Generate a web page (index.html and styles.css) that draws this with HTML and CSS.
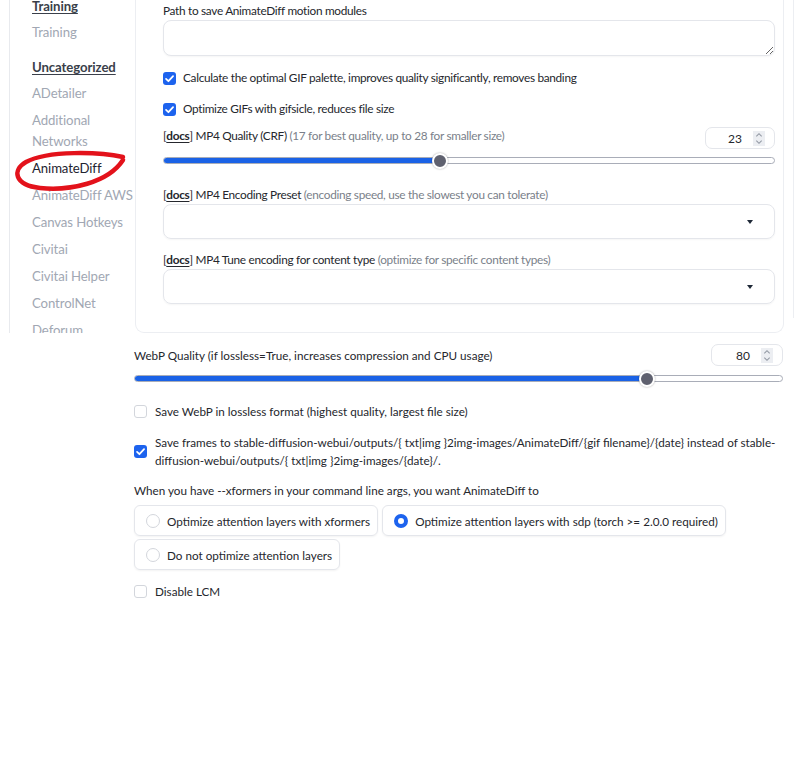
FILE: index.html
```html
<!DOCTYPE html>
<html lang="en">
<head>
  <meta charset="UTF-8">
  <title>Settings - AnimateDiff</title>
  <link rel="stylesheet" href="styles.css">
</head>
<body>
  <div class="page">
    <section class="top">
      <nav class="sidebar">
        <div class="cat">Training</div>
        <div class="item">Training</div>
        <div class="cat">Uncategorized</div>
        <div class="item">ADetailer</div>
        <div class="item">Additional Networks</div>
        <div class="item active">AnimateDiff</div>
        <div class="item">AnimateDiff AWS</div>
        <div class="item">Canvas Hotkeys</div>
        <div class="item">Civitai</div>
        <div class="item">Civitai Helper</div>
        <div class="item">ControlNet</div>
        <div class="item">Deforum</div>
      </nav>

      <div class="panel">
        <div class="label first">Path to save AnimateDiff motion modules</div>
        <textarea class="textbox" rows="2"></textarea>

        <label class="check-row gap-top">
          <span class="check"><svg viewBox="0 0 12 12"><path d="M2.8 6.3l2.2 2.2 4.3-4.7"/></svg></span>
          Calculate the optimal GIF palette, improves quality significantly, removes banding
        </label>
        <label class="check-row gap-top">
          <span class="check"><svg viewBox="0 0 12 12"><path d="M2.8 6.3l2.2 2.2 4.3-4.7"/></svg></span>
          Optimize GIFs with gifsicle, reduces file size
        </label>

        <div class="slider-head crf">
          <span class="label">[<b>docs</b>] MP4 Quality (CRF) <span class="hint">(17 for best quality, up to 28 for smaller size)</span></span>
          <div class="number"><span class="value">23</span><span class="spin"><svg viewBox="0 0 10 14"><path d="M2.5 5l2.5-2.5 2.5 2.5M2.5 9l2.5 2.5 2.5-2.5"/></svg></span></div>
        </div>
        <div class="slider"><div class="fill" style="width: 45.3%"></div><div class="thumb" style="left: 45.3%"></div></div>

        <div class="label field-top">[<b>docs</b>] MP4 Encoding Preset <span class="hint">(encoding speed, use the slowest you can tolerate)</span></div>
        <div class="dropdown"><span class="caret"></span></div>

        <div class="label field-top-sm">[<b>docs</b>] MP4 Tune encoding for content type <span class="hint">(optimize for specific content types)</span></div>
        <div class="dropdown"><span class="caret"></span></div>
      </div>

      <div class="edge"></div>

      <svg class="scribble" viewBox="0 0 140 200" width="140" height="200">
        <path d="M123 157 C 100 152, 48 150, 26 162 C 12 170, 14 185, 40 188 C 70 191, 108 183, 123 160"/>
      </svg>
    </section>

    <section class="bottom">
      <div class="slider-head webp">
        <span class="label">WebP Quality (if lossless=True, increases compression and CPU usage)</span>
        <div class="number wide"><span class="value">80</span><span class="spin"><svg viewBox="0 0 10 14"><path d="M2.5 5l2.5-2.5 2.5 2.5M2.5 9l2.5 2.5 2.5-2.5"/></svg></span></div>
      </div>
      <div class="slider slider-b"><div class="fill" style="width: 79.2%"></div><div class="thumb" style="left: 79.2%"></div></div>

      <label class="check-row wide-gap lossless">
        <span class="check off"></span>
        Save WebP in lossless format (highest quality, largest file size)
      </label>
      <label class="check-row wide-gap frames">
        <span class="check"><svg viewBox="0 0 12 12"><path d="M2.8 6.3l2.2 2.2 4.3-4.7"/></svg></span>
        <span>Save frames to stable-diffusion-webui/outputs/{ txt|img }2img-images/AnimateDiff/{gif filename}/{date} instead of stable-diffusion-webui/outputs/{ txt|img }2img-images/{date}/.</span>
      </label>

      <div class="label question">When you have --xformers in your command line args, you want AnimateDiff to</div>
      <div class="radios">
        <label class="radio-box"><span class="radio"></span>Optimize attention layers with xformers</label>
        <label class="radio-box"><span class="radio on"></span>Optimize attention layers with sdp (torch &gt;= 2.0.0 required)</label>
        <label class="radio-box"><span class="radio"></span>Do not optimize attention layers</label>
      </div>

      <label class="check-row wide-gap lcm">
        <span class="check off"></span>
        Disable LCM
      </label>
    </section>
  </div>
</body>
</html>
```

FILE: styles.css
```css
:root {
  --text: #25272d;
  --muted: #7a7f8a;
  --nav: #a1a7b3;
  --border: #e4e6eb;
  --blue: #1a62e6;
  --thumb: #5f616f;
}

body {
  margin: 0;
  background: #ffffff;
  color: var(--text);
  font-family: Lato, "Open Sans", sans-serif;
  font-size: 11.7px;
}

.page {
  width: 800px;
}

/* top: settings screen with the sidebar */
.top {
  position: relative;
  display: flex;
  align-items: flex-start;
  height: 333px;
  overflow: hidden;
}

.sidebar {
  width: 103px;
  flex-shrink: 0;
  margin-left: 9px;
  padding-left: 22px;
  height: 333px;
  border-left: 1px solid #e8eaee;
  font-size: 13.2px;
  letter-spacing: -0.1px;
}

.cat {
  line-height: 21px;
  margin: 11px 0 2px;
  font-weight: 700;
  color: #3a3f4a;
  text-decoration: underline;
  text-underline-offset: 2px;
}

.cat:first-child {
  margin-top: -4px;
}

.item {
  line-height: 21px;
  padding: 3px 0;
  color: var(--nav);
}

.item.active {
  color: #1e2330;
}

.panel {
  width: 649px;
  flex-shrink: 0;
  box-sizing: border-box;
  padding: 0 8px 28px 27px;
  border: 1px solid #eceef2;
  border-top: none;
  border-radius: 0 0 9px 9px;
  font-size: 11.8px;
  letter-spacing: -0.3px;
}

.edge {
  width: 0;
  height: 318px;
  margin-left: 9px;
  border-left: 1px solid #eceef2;
}

.scribble {
  position: absolute;
  left: 0;
  top: 0;
  pointer-events: none;
}

.scribble path {
  fill: none;
  stroke: #e3121b;
  stroke-width: 4.5;
  stroke-linecap: round;
}

.label {
  display: block;
  line-height: 18px;
}

.label b {
  text-decoration: underline;
  text-underline-offset: 2px;
}

.label.first {
  padding-top: 2px;
}

.hint {
  color: var(--muted);
}

.textbox {
  display: block;
  width: 100%;
  height: 36px;
  box-sizing: border-box;
  margin: 0;
  border: 1px solid var(--border);
  border-radius: 8px;
  resize: vertical;
  box-shadow: 0 1px 2px rgba(0, 0, 0, 0.04);
}

.check-row {
  display: flex;
  align-items: center;
  gap: 7px;
  line-height: 18px;
}

.gap-top {
  margin-top: 13px;
}

.check {
  width: 13px;
  height: 13px;
  flex-shrink: 0;
  box-sizing: border-box;
  border-radius: 3px;
  background: #1d63ee;
  display: flex;
}

.check svg {
  width: 13px;
  height: 13px;
}

.check path {
  fill: none;
  stroke: #ffffff;
  stroke-width: 1.6;
  stroke-linecap: round;
  stroke-linejoin: round;
}

.check.off {
  background: #ffffff;
  border: 1px solid #d3d6dc;
}

.slider-head {
  display: flex;
  align-items: flex-start;
  justify-content: space-between;
  height: 22px;
}

.slider-head.crf {
  margin-top: 9px;
}

.number {
  width: 70px;
  height: 22px;
  box-sizing: border-box;
  border: 1px solid var(--border);
  border-radius: 7px;
  display: flex;
  align-items: center;
  justify-content: flex-end;
  padding-right: 9px;
  gap: 11px;
  font-size: 12px;
  letter-spacing: 0;
}

.number.wide {
  width: 72px;
}

.spin {
  width: 12px;
  height: 15px;
  background: #eceef2;
  display: flex;
}

.spin svg {
  width: 12px;
  height: 15px;
}

.spin path {
  fill: none;
  stroke: #9399a4;
  stroke-width: 1;
}

.slider {
  position: relative;
  height: 5px;
  margin: 8px 0 6px;
  border: 1px solid #a9adb8;
  border-radius: 4px;
  background: #ffffff;
}

.fill {
  height: 100%;
  background: var(--blue);
  border-radius: 3px 0 0 3px;
}

.thumb {
  position: absolute;
  top: 50%;
  width: 16px;
  height: 16px;
  box-sizing: border-box;
  border-radius: 50%;
  background: var(--thumb);
  border: 2px solid #ffffff;
  box-shadow: 0 0 2px rgba(0, 0, 0, 0.35);
  transform: translate(-50%, -50%);
}

.field-top {
  margin-top: 22px;
}

.field-top-sm {
  margin-top: 12px;
}

.dropdown {
  height: 35px;
  box-sizing: border-box;
  border: 1px solid var(--border);
  border-radius: 8px;
  box-shadow: 0 1px 2px rgba(0, 0, 0, 0.04);
  display: flex;
  align-items: center;
  justify-content: flex-end;
  padding-right: 21px;
}

.caret {
  width: 0;
  height: 0;
  border-left: 3.5px solid transparent;
  border-right: 3.5px solid transparent;
  border-top: 4.5px solid #1f2937;
}

/* bottom: pasted lower part of the same settings */
.bottom {
  padding: 0 17px 0 134px;
}

.bottom .slider-head {
  align-items: center;
}

.slider-head.webp {
  margin-top: 11px;
}

.slider-b {
  margin-top: 9px;
}

.wide-gap {
  gap: 8px;
}

.lossless {
  margin-top: 20px;
}

.frames {
  margin-top: 13px;
}

.question {
  margin-top: 12px;
}

.radios {
  display: flex;
  flex-wrap: wrap;
  gap: 3px 4px;
  margin-top: 6px;
}

.radio-box {
  display: flex;
  align-items: center;
  gap: 7px;
  height: 31px;
  box-sizing: border-box;
  padding: 0 7px 0 11px;
  border: 1px solid var(--border);
  border-radius: 6px;
  box-shadow: 0 1px 2px rgba(0, 0, 0, 0.05);
}

.radio {
  width: 14px;
  height: 14px;
  box-sizing: border-box;
  border-radius: 50%;
  border: 1px solid #d3d6dc;
  background: #ffffff;
}

.radio.on {
  border: 4.5px solid #1d63ee;
}

.lcm {
  margin-top: 12px;
}
```
